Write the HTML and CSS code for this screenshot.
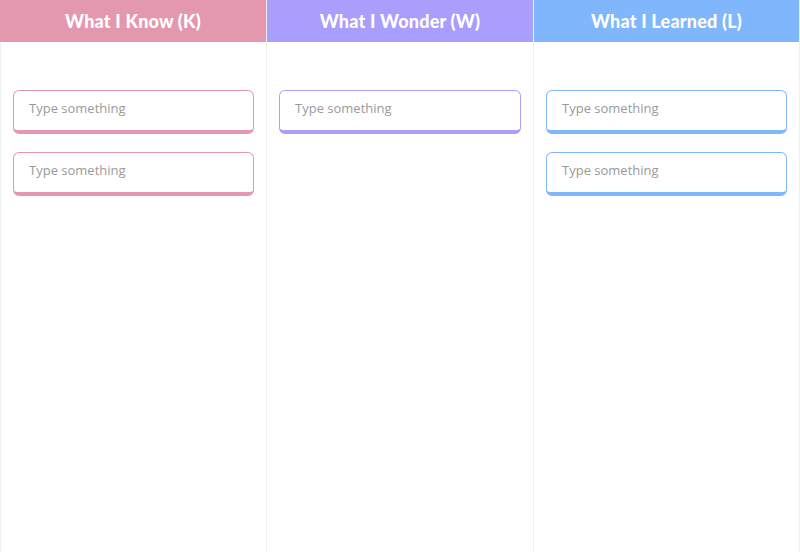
FILE: index.html
```html
<!DOCTYPE html>
<html lang="en">
<head>
    <meta charset="UTF-8">
    <title>KWL Chart</title>
    <link rel="stylesheet" href="styles.css">
</head>
<body>
    <div class="board">
        <!-- Know column -->
        <section class="column know">
            <h2 class="column-head">What I Know (K)</h2>
            <div class="column-body">
                <div class="note">Type something</div>
                <div class="note">Type something</div>
            </div>
        </section>

        <!-- Wonder column -->
        <section class="column wonder">
            <h2 class="column-head">What I Wonder (W)</h2>
            <div class="column-body">
                <div class="note">Type something</div>
            </div>
        </section>

        <!-- Learned column -->
        <section class="column learned">
            <h2 class="column-head">What I Learned (L)</h2>
            <div class="column-body">
                <div class="note">Type something</div>
                <div class="note">Type something</div>
            </div>
        </section>
    </div>
</body>
</html>
```

FILE: styles.css
```css
/* Reset */
* {
    margin: 0;
    padding: 0;
    box-sizing: border-box;
}

body {
    background-color: #fff;
    font-family: "Open Sans", Arial, sans-serif;
    width: 800px;
    height: 552px;
    overflow: hidden;
}

/* Board with three columns */
.board {
    display: grid;
    grid-template-columns: 267px 267px 266px;
    height: 552px;
}

.column {
    display: flex;
    flex-direction: column;
    border-right: 1px solid #eef0f3;
}

.column:first-child {
    border-left: 1px solid #eef0f3;
}

/* Column header */
.column-head {
    height: 42px;
    display: flex;
    align-items: center;
    justify-content: center;
    color: #fff;
    font-family: Lato, "Open Sans", sans-serif;
    font-weight: 900;
    font-size: 18px;
    letter-spacing: 0.2px;
}

.know .column-head {
    background-color: #e498ae;
    margin-left: -1px;
}

.wonder .column-head {
    background-color: #a99efb;
}

.learned .column-head {
    background-color: #80b6fb;
}

/* Notes */
.column-body {
    display: flex;
    flex-direction: column;
    gap: 18px;
    padding: 48px 12px 0 12px;
}

.note {
    height: 44px;
    padding: 8px 15px 0;
    border: 1.5px solid;
    border-bottom-width: 4px;
    border-radius: 6px;
    background-color: #fff;
    font-size: 13px;
    color: #9a9a9a;
}

.know .note {
    border-color: #e498ae;
}

.wonder .note {
    border-color: #ad9ef9;
}

.learned .note {
    border-color: #80b6fb;
}
```
